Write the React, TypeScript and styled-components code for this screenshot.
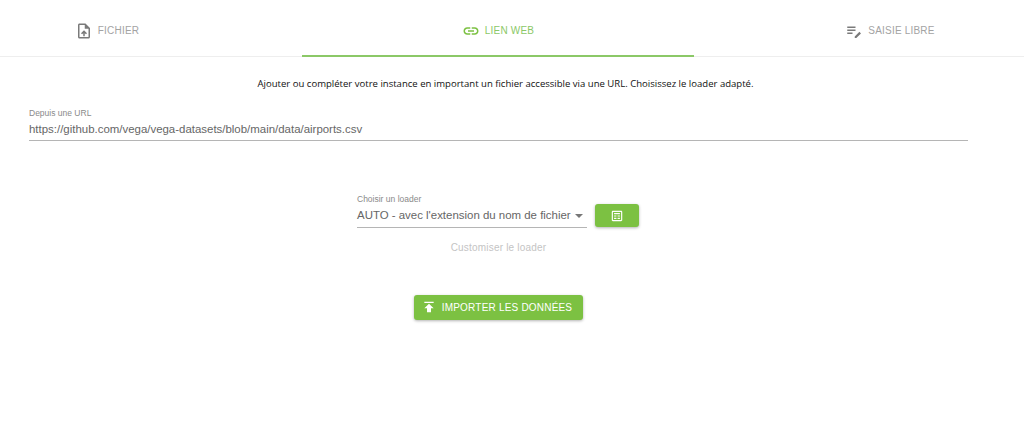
import React from 'react'
import styled, { createGlobalStyle } from 'styled-components'

const GlobalStyle = createGlobalStyle`
  html, body {
    margin: 0;
    padding: 0;
    background: #fff;
    font-family: 'Liberation Sans', Arial, sans-serif;
  }
`

const Page = styled.div`
  width: 1024px;
  height: 425px;
  overflow: hidden;
`

const TabBar = styled.div`
  display: grid;
  grid-template-columns: 302px 392px 330px;
  height: 57px;
  box-sizing: border-box;
  border-bottom: 1px solid #eeeeee;
`

const Tab = styled.div<{ $active?: boolean; $left?: number; $right?: number }>`
  height: 57px;
  box-sizing: border-box;
  display: flex;
  align-items: center;
  justify-content: center;
  gap: 5px;
  padding: 6px ${p => p.$right || 0}px 0 ${p => p.$left || 0}px;
  font-size: 10px;
  letter-spacing: 0.2px;
  color: ${p => (p.$active ? '#8bc867' : '#a3a3a3')};
  border-bottom: 2px solid ${p => (p.$active ? '#8bc867' : 'transparent')};
  svg {
    width: 18px;
    height: 18px;
    fill: ${p => (p.$active ? '#7cc142' : '#7a7a7a')};
  }
`

const Content = styled.div`
  padding: 0 56px 0 29px;
`

const Intro = styled.p`
  margin: 20px 0 0;
  padding-left: 14px;
  text-align: center;
  font-family: 'Open Sans', sans-serif;
  font-size: 9.55px;
  line-height: 14px;
  color: #111;
`

const UrlField = styled.div`
  margin-top: 17px;
  border-bottom: 1px solid #b5b5b5;
  padding-bottom: 3px;
`

const FieldLabel = styled.div`
  font-size: 8.5px;
  line-height: 10px;
  color: #8a8a8a;
`

const FieldValue = styled.div`
  margin-top: 4px;
  font-size: 11.45px;
  line-height: 15px;
  color: #666;
  white-space: nowrap;
`

const LoaderRow = styled.div`
  display: flex;
  justify-content: center;
  align-items: flex-end;
  gap: 8px;
  margin-top: 53px;
  padding-right: 1px;
`

const SelectField = styled.div`
  width: 230px;
  border-bottom: 1px solid #b5b5b5;
  padding-bottom: 4px;
`

const SelectValue = styled(FieldValue)`
  display: flex;
  justify-content: space-between;
  align-items: center;
  padding-right: 4px;
`

const Caret = styled.span`
  width: 0;
  height: 0;
  border-left: 4px solid transparent;
  border-right: 4px solid transparent;
  border-top: 4px solid #777;
`

const Button = styled.button`
  display: inline-flex;
  align-items: center;
  justify-content: center;
  border: 0;
  border-radius: 3px;
  background: #7cc142;
  color: #fff;
  font-family: inherit;
  box-shadow: 0 1px 3px rgba(0, 0, 0, 0.3);
  svg {
    fill: #fff;
  }
`

const IconButton = styled(Button)`
  width: 44px;
  height: 23px;
  padding: 0;
  margin-bottom: 1px;
  svg {
    width: 14px;
    height: 14px;
  }
`

const Customize = styled.div`
  margin-top: 13px;
  text-align: center;
  font-size: 10px;
  line-height: 13px;
  letter-spacing: 0.2px;
  color: #c4c4c4;
`

const ImportRow = styled.div`
  display: flex;
  justify-content: center;
  margin-top: 41px;
`

const ImportButton = styled(Button)`
  width: 169px;
  height: 25px;
  gap: 5px;
  padding: 0 4px 0 0;
  font-size: 10px;
  letter-spacing: 0.2px;
  svg {
    width: 16px;
    height: 16px;
    margin-top: -2px;
  }
`

const FileIcon = () => (
  <svg viewBox="0 0 24 24">
    <path d="M14 2H6c-1.1 0-2 .9-2 2v16c0 1.1.9 2 2 2h12c1.1 0 2-.9 2-2V8l-6-6zm4 18H6V4h7v5h5v11zM8 15.01l1.41 1.41L11 14.84V19h2v-4.16l1.59 1.59L16 15.01 12.01 11 8 15.01z" />
  </svg>
)

const LinkIcon = () => (
  <svg viewBox="0 0 24 24">
    <path d="M17 7h-4v2h4c1.65 0 3 1.35 3 3s-1.35 3-3 3h-4v2h4c2.76 0 5-2.24 5-5s-2.24-5-5-5zm-6 8H7c-1.65 0-3-1.35-3-3s1.35-3 3-3h4V7H7c-2.76 0-5 2.24-5 5s2.24 5 5 5h4v-2zm-3-4h8v2H8z" />
  </svg>
)

const NotesIcon = () => (
  <svg viewBox="0 0 24 24">
    <path d="M3 10h11v2H3zm0-4h11v2H3zm0 8h7v2H3zm10 5.3 6.2-6.2 2.1 2.1-6.2 6.2H13z" />
  </svg>
)

const TableIcon = () => (
  <svg viewBox="0 0 24 24">
    <path d="M19 3H5c-1.1 0-2 .9-2 2v14c0 1.1.9 2 2 2h14c1.1 0 2-.9 2-2V5c0-1.1-.9-2-2-2zm0 16H5V5h14v14zM7 7h10v2H7zm0 4h4v2H7zm6 0h4v2h-4zm-6 4h4v2H7zm6 0h4v2h-4z" />
  </svg>
)

const UploadIcon = () => (
  <svg viewBox="0 0 24 24">
    <path d="M5 4v2h14V4H5zm0 10h4v6h6v-6h4l-7-7-7 7z" />
  </svg>
)

const App = () => {
  return (
    <Page>
      <GlobalStyle />
      <TabBar>
        <Tab $right={88}>
          <FileIcon />
          FICHIER
        </Tab>
        <Tab $active>
          <LinkIcon />
          LIEN WEB
        </Tab>
        <Tab $left={62}>
          <NotesIcon />
          SAISIE LIBRE
        </Tab>
      </TabBar>
      <Content>
        <Intro>
          Ajouter ou compléter votre instance en important un fichier accessible via une URL. Choisissez le loader adapté.
        </Intro>
        <UrlField>
          <FieldLabel>Depuis une URL</FieldLabel>
          <FieldValue>https://github.com/vega/vega-datasets/blob/main/data/airports.csv</FieldValue>
        </UrlField>
        <LoaderRow>
          <SelectField>
            <FieldLabel>Choisir un loader</FieldLabel>
            <SelectValue>
              AUTO - avec l'extension du nom de fichier
              <Caret />
            </SelectValue>
          </SelectField>
          <IconButton>
            <TableIcon />
          </IconButton>
        </LoaderRow>
        <Customize>Customiser le loader</Customize>
        <ImportRow>
          <ImportButton>
            <UploadIcon />
            IMPORTER LES DONNÉES
          </ImportButton>
        </ImportRow>
      </Content>
    </Page>
  )
}

export default App
